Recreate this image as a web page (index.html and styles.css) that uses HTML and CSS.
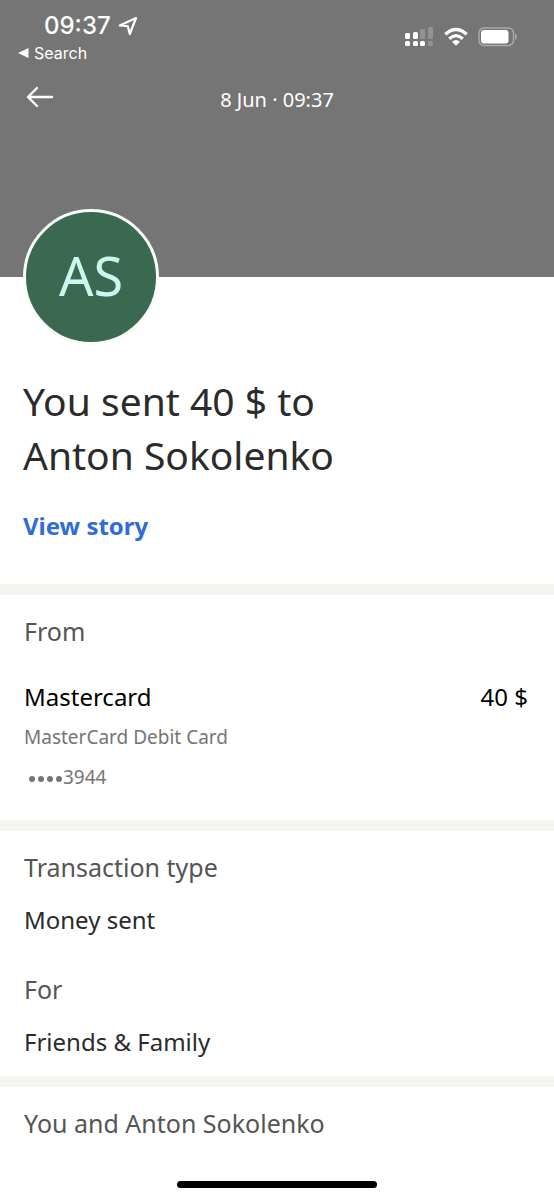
FILE: index.html
```html
<!DOCTYPE html>
<html lang="en">
<head>
<meta charset="utf-8">
<meta name="viewport" content="width=device-width, initial-scale=1">
<title>Payment details</title>
<link rel="stylesheet" href="styles.css">
</head>
<body>
<div class="screen">
  <header class="hero">
    <div class="status">
      <div class="status-left">
        <div class="clock">
          <span>09:37</span>
          <svg width="20" height="20" viewBox="0 0 20 20" aria-hidden="true"><path d="M18 2 1.800 9.500 9.800 10.200 11.800 18Z" fill="none" stroke="#fff" stroke-width="2.200" stroke-linejoin="round"/></svg>
        </div>
        <a class="return-link" href="#"><svg width="11" height="12" viewBox="0 0 11 12" aria-hidden="true"><path d="M0 6 10.500 1V11Z" fill="#fff"/></svg>Search</a>
      </div>
      <div class="status-icons">
        <svg width="29" height="22" viewBox="0 0 29 22" aria-hidden="true">
          <g fill="#fff"><rect x="0" y="7" width="5" height="6" rx="1.500"/><rect x="8" y="6" width="5" height="7" rx="1.500"/><rect x="0" y="15" width="5" height="5" rx="1.500"/><rect x="8" y="15" width="5" height="5" rx="1.500"/><rect x="15" y="15" width="5" height="5" rx="1.500"/></g>
          <g fill="#929292"><rect x="15" y="3" width="5" height="10" rx="1"/><rect x="23" y="1" width="5" height="12" rx="1"/><rect x="23" y="15" width="5" height="5" rx="1"/></g>
        </svg>
        <svg width="24" height="20" viewBox="0 0 24 20" aria-hidden="true"><g fill="none" stroke="#fff" stroke-width="3.200"><path d="M1.300 7.300Q12-2.300 22.700 7.300"/><path d="M5.200 11.800Q12 5.600 18.800 11.800"/></g><path d="M8 14.700Q12 11.300 16 14.700L12 18.800Z" fill="#fff"/></svg>
        <svg width="40" height="20" viewBox="0 0 40 20" aria-hidden="true"><rect x="1" y="1" width="34.500" height="17.500" rx="5" fill="none" stroke="#a9a9a9" stroke-width="1.500"/><rect x="3" y="3" width="27.500" height="13.500" rx="3" fill="#fff"/><path d="M37 6.500Q39 7.500 39 9.800T37 13Z" fill="#a9a9a9"/></svg>
      </div>
    </div>
    <nav class="nav">
      <button class="back" type="button" aria-label="Back"><svg width="28" height="22" viewBox="0 0 28 22" aria-hidden="true"><path d="M26 11H2M11 2 2 11 11 20" fill="none" stroke="#fff" stroke-width="2.400" stroke-linecap="round" stroke-linejoin="round"/></svg></button>
      <time class="date">8 Jun · 09:37</time>
    </nav>
  </header>
  <main class="content">
    <section class="summary">
      <div class="avatar">AS</div>
      <h1 class="title">You sent 40 $ to<br>Anton Sokolenko</h1>
      <a class="story" href="#">View story</a>
    </section>
    <section class="section source">
      <h2 class="label">From</h2>
      <div class="row"><span>Mastercard</span><span>40 $</span></div>
      <p class="detail">MasterCard Debit Card</p>
      <p class="detail card-number"><span class="dots"><i></i><i></i><i></i><i></i></span>3944</p>
    </section>
    <section class="section">
      <dl class="facts">
        <div class="fact"><dt class="label">Transaction type</dt><dd class="value">Money sent</dd></div>
        <div class="fact"><dt class="label">For</dt><dd class="value">Friends &amp; Family</dd></div>
      </dl>
    </section>
    <section class="section">
      <h2 class="label">You and Anton Sokolenko</h2>
    </section>
  </main>
  <footer class="home"><div class="home-bar"></div></footer>
</div>
</body>
</html>
```

FILE: styles.css
```css
* { box-sizing: border-box; }
body { margin: 0; background: #fff; color: #2b2b2b; font-family: "Noto Sans", sans-serif; }
h1, h2, p, dl, dd { margin: 0; font-weight: 400; }
a { text-decoration: none; }
svg { display: block; flex: none; }
.screen { display: flex; flex-direction: column; min-height: 100vh; }
.hero { background: #757575; color: #fff; padding: 12px 24px 162px; }
.status { display: flex; justify-content: space-between; align-items: flex-start; padding: 0 12px 0 20px; font-family: Inter, sans-serif; }
.status-left { display: flex; flex-direction: column; }
.clock { display: flex; align-items: center; gap: 7px; font-size: 24px; line-height: 28px; font-weight: 500; }
.return-link { display: flex; align-items: center; gap: 5px; margin-left: -26px; color: #fff; font-size: 16px; line-height: 26px; }
.status-icons { display: flex; align-items: center; gap: 10px; padding-top: 14px; }
.nav { display: grid; grid-template-columns: 1fr auto 1fr; align-items: center; padding-top: 18px; }
.back { justify-self: start; border: 0; padding: 0 2px 6px; background: none; cursor: pointer; }
.date { font-size: 20px; line-height: 31px; }
.content { flex: 1; }
.summary { display: flex; flex-direction: column; align-items: flex-start; padding: 0 23px 41px; }
.avatar { display: flex; align-items: center; justify-content: center; width: 136px; height: 136px; margin-top: -68px; padding-bottom: 4px; border: 3px solid #f7fcf8; border-radius: 50%; background: #3b6850; color: #cdf7ee; font-size: 54px; line-height: 64px; }
.title { margin-top: 29px; font-size: 39px; line-height: 54px; }
.story { margin-top: 27px; color: #306bdc; font-size: 24px; line-height: 34px; font-weight: 700; }
.section { border-top: 11px solid #f6f4f1; padding: 20px 24px 18px; }
.label { color: #555; font-size: 25px; line-height: 32px; }
.row, .value { font-size: 24px; line-height: 32px; }
.source { padding-bottom: 28px; }
.row { display: flex; justify-content: space-between; margin: 34px 2px 9px 0; color: #000; }
.detail { color: #757575; font-size: 19px; line-height: 30px; }
.card-number { display: flex; align-items: center; margin-top: 10px; }
.dots { display: flex; gap: 3px; padding: 3px 1px 0 5px; }
.dots i { width: 6px; height: 6px; border-radius: 50%; background: #757575; }
.facts { display: flex; flex-direction: column; gap: 37px; }
.fact { display: flex; flex-direction: column; gap: 21px; }
.home { display: flex; justify-content: center; padding-bottom: 12px; }
.home-bar { width: 36%; height: 7px; border-radius: 4px; background: #000; }
```
